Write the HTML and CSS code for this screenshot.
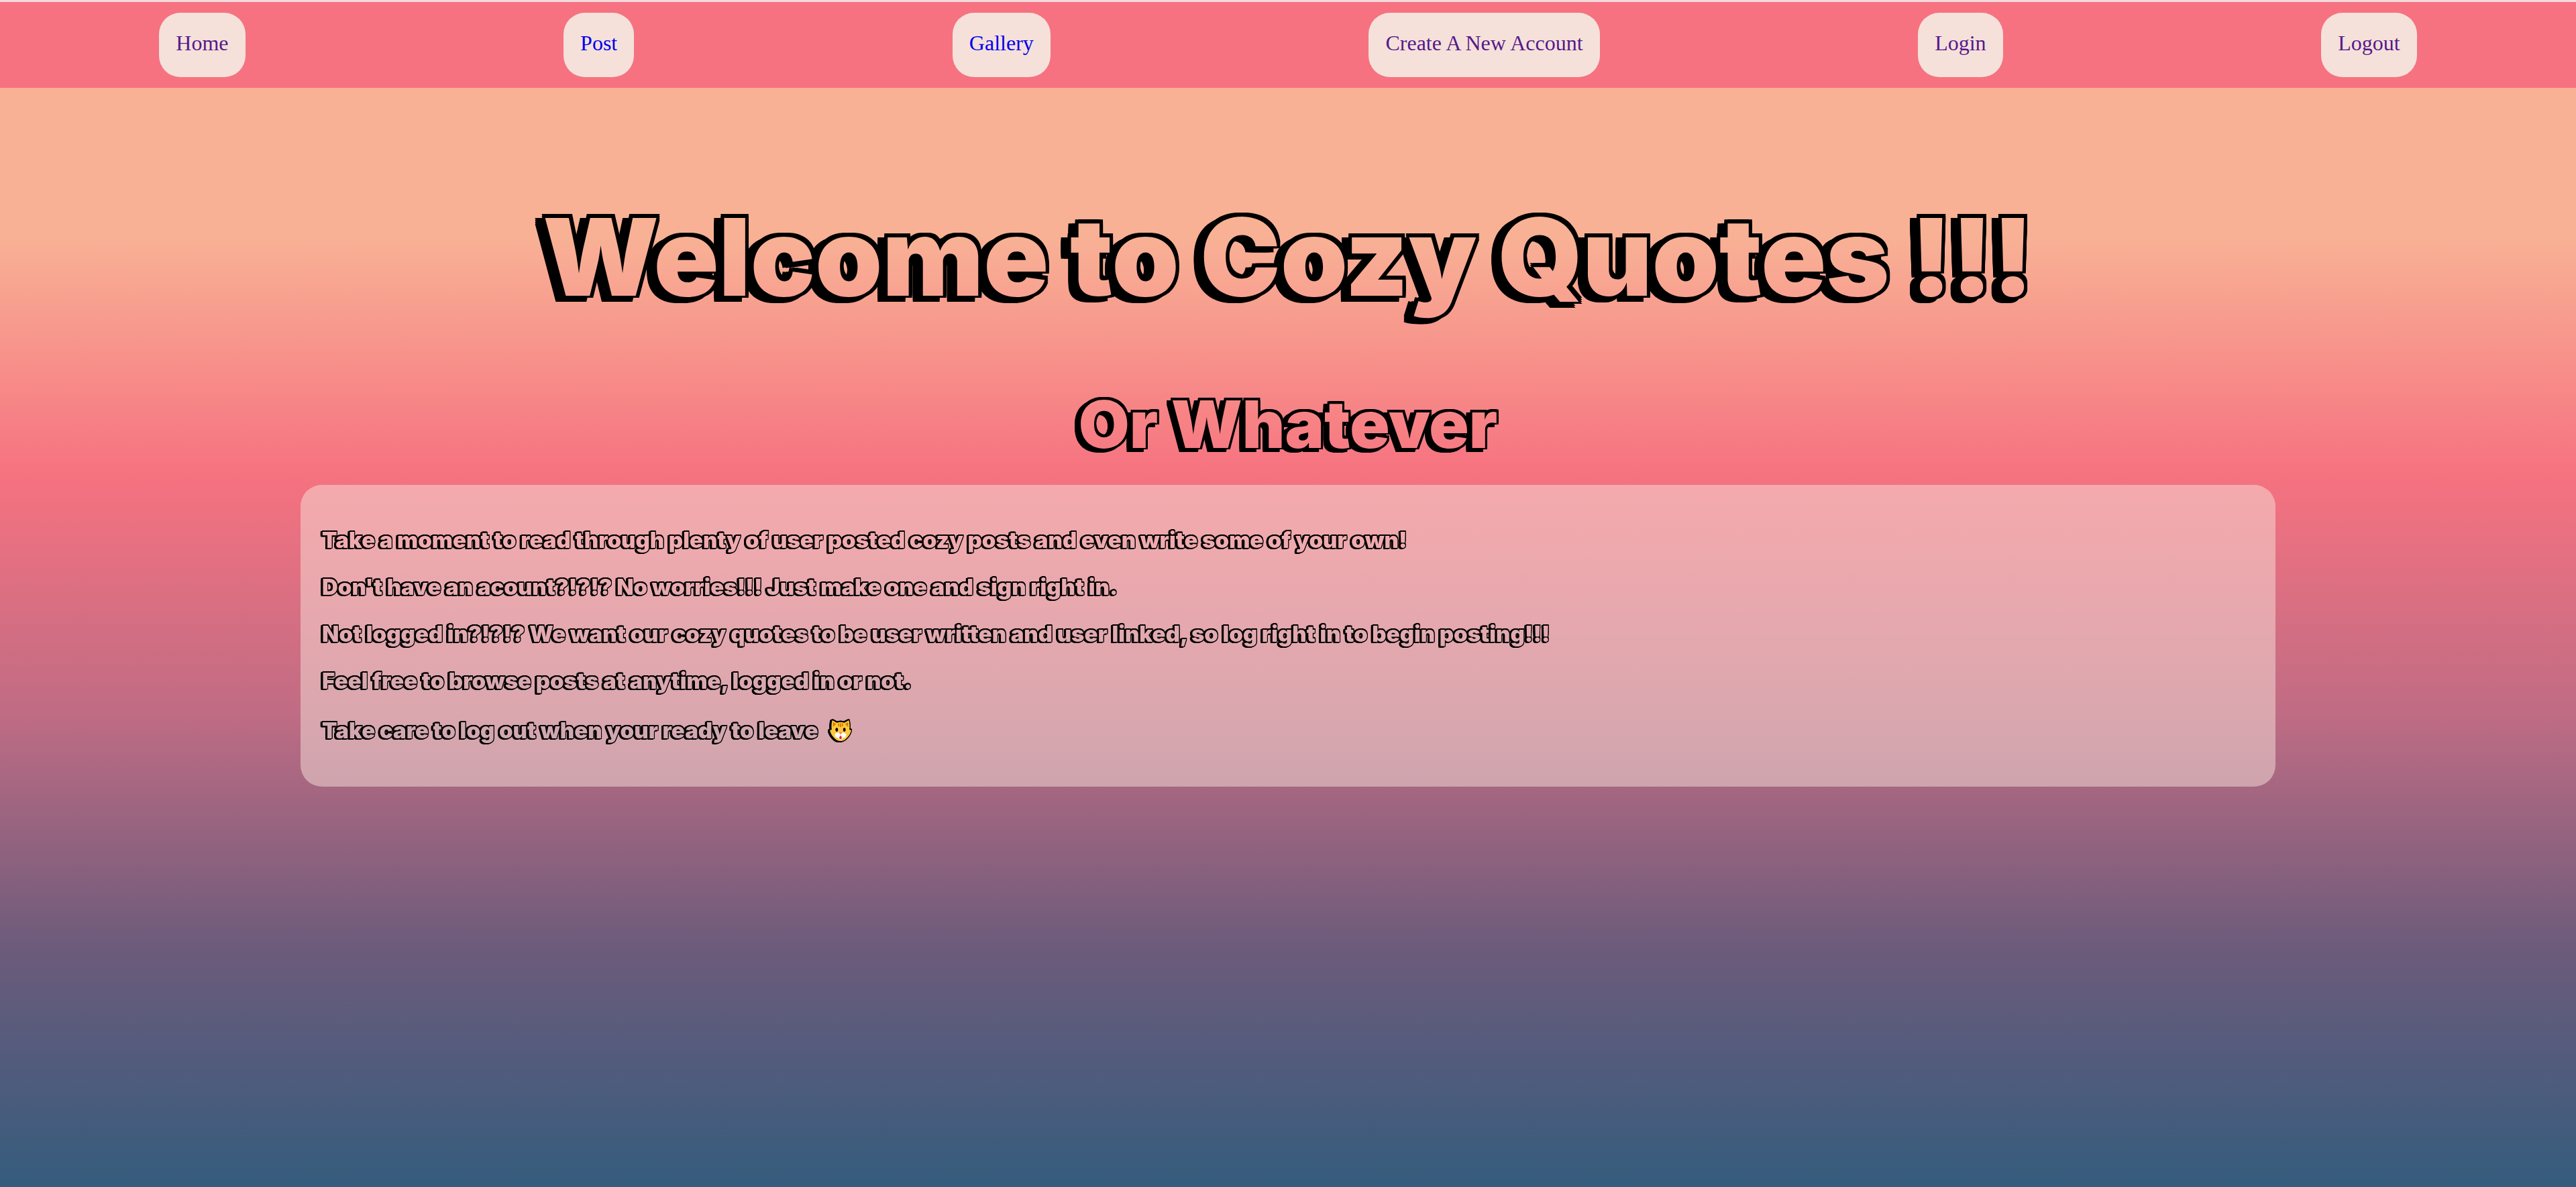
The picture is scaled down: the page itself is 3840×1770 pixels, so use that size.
FILE: index.html
```html
<!DOCTYPE html>
<html lang="en">
<head>
<meta charset="utf-8">
<title>Cozy Quotes</title>
<link rel="stylesheet" href="styles.css">
</head>
<body>
<nav class="nav">
  <a class="nav-link visited" href="#home">Home</a>
  <a class="nav-link" href="#post">Post</a>
  <a class="nav-link" href="#gallery">Gallery</a>
  <a class="nav-link visited" href="#signup">Create A New Account</a>
  <a class="nav-link visited" href="#login">Login</a>
  <a class="nav-link visited" href="#logout">Logout</a>
</nav>
<main class="main">
  <h1 class="title">Welcome to Cozy Quotes !!!</h1>
  <h2 class="subtitle">Or Whatever</h2>
  <section class="card">
    <div class="copy">
      <p>Take a moment to read through plenty of user posted cozy posts and even write some of your own!</p>
      <p>Don't have an acount?!?!? No worries!!! Just make one and sign right in.</p>
      <p>Not logged in?!?!? We want our cozy quotes to be user written and user linked, so log right in to begin posting!!!</p>
      <p>Feel free to browse posts at anytime, logged in or not.</p>
      <p class="last">Take care to log out when your ready to leave
        <svg class="cat" viewBox="0 0 36 36" role="img" aria-label="cat face">
          <path d="M5 2 L12 6 Q18 4 24 6 L31 2 Q33 8 32 17 L35 18 Q33 25 29 29 Q24 35 18 35 Q12 35 7 29 Q3 25 1 18 L4 17 Q3 8 5 2Z" fill="#ffc83d"/>
          <path d="M6 5 L11 8 L6 13Z M30 5 L25 8 L30 13Z M14 7h2v5h-2z M17 7h2v6h-2z M20 7h2v5h-2z" fill="#d67d00"/>
          <ellipse cx="12" cy="17" rx="2" ry="3"/><ellipse cx="24" cy="17" rx="2" ry="3"/>
          <path d="M18 22 Q12 20 9 24 Q9 30 14 30 Q16 33 18 33 Q20 33 22 30 Q27 30 27 24 Q24 20 18 22Z" fill="#fff"/>
          <path d="M15 21h6l-3 4z" fill="#ff8257"/>
          <path d="M18 26 Q22 31 18 32 Q14 31 18 26Z" fill="#f01b35"/>
        </svg></p>
    </div>
  </section>
</main>
</body>
</html>
```
FILE: styles.css
```css
* { box-sizing: border-box; }
html { min-height: 100%; }
body {
  margin: 0;
  min-height: 100vh;
  background: linear-gradient(#f8b195 20%, #f67280 40%, #c06c84 60%, #6c5b7b 80%, #355c7d 100%);
  font-family: "Liberation Serif", serif;
  font-size: 32px;
}
.nav {
  display: flex;
  justify-content: space-around;
  padding: 16px 0;
  border-top: 3px solid #f4d9de;
  background: #f67280;
}
.nav-link {
  padding: 26px 25px 32px;
  border-radius: 32px;
  background: #f5e1da;
  color: #0000ee;
  line-height: 38px;
  text-decoration: none;
}
.visited { color: #551a8b; }
.main { font-family: Inter, sans-serif; font-weight: 900; }
.title, .subtitle {
  margin: 0 auto;
  width: fit-content;
  color: transparent;
  background-clip: text;
  -webkit-background-clip: text;
  font-weight: 900;
  text-align: center;
}
/* Hollow lettering: the glyphs carry the page gradient, stacked shadows draw the outline. */
.title {
  margin-top: 152px;
  background-image: linear-gradient(#f8b195 70px, #f89b8f 200px);
  font-size: 160px;
  line-height: 200px;
  filter: drop-shadow(5px 0 0 #000) drop-shadow(-5px 0 0 #000) drop-shadow(0 -6px 0 #000) drop-shadow(0 3px 0 #000) drop-shadow(-10px 6px 0 #000);
}
.subtitle {
  margin-top: 100px;
  background-image: linear-gradient(#f88a87, #f67882);
  font-size: 98px;
  line-height: 100px;
  filter: drop-shadow(3px 0 0 #000) drop-shadow(-3px 0 0 #000) drop-shadow(0 -4px 0 #000) drop-shadow(0 2px 0 #000) drop-shadow(-6px 4px 0 #000);
}
.card {
  margin: 40px 448px 0;
  padding: 63px 32px 61px;
  border-radius: 32px;
  background: rgba(245, 225, 218, 0.5);
}
.copy {
  display: grid;
  gap: 32px;
  color: transparent;
  background: linear-gradient(#f2abae, #d0a8b0);
  background-clip: text;
  -webkit-background-clip: text;
  font-size: 33px;
  line-height: 38px;
  filter: drop-shadow(1px 0 0 #000) drop-shadow(-1px 0 0 #000) drop-shadow(0 -2px 0 #000) drop-shadow(0 1px 0 #000) drop-shadow(-2px 1px 0 #000);
}
.copy p { margin: 0; }
.copy .last { line-height: 46px; }
.cat { width: 34px; height: 34px; margin-left: 10px; vertical-align: -5px; }
```
